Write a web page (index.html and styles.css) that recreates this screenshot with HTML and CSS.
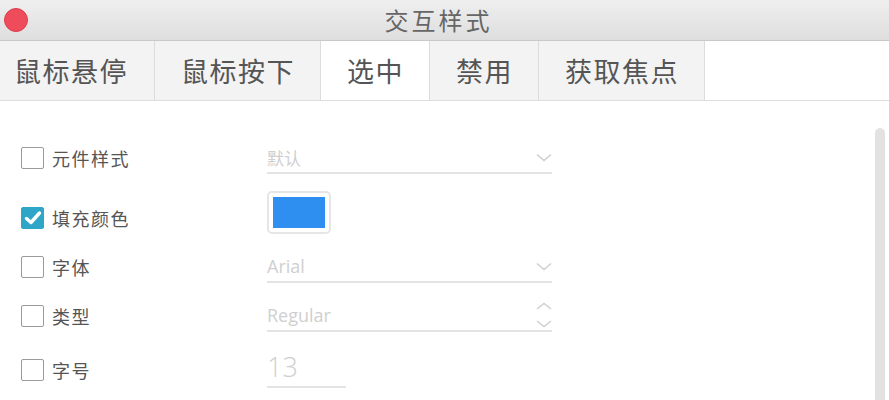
FILE: index.html
```html
<!DOCTYPE html>
<html lang="zh">
<head>
<meta charset="utf-8">
<title>交互样式</title>
<link rel="stylesheet" href="styles.css">
</head>
<body>
<div class="window">
  <header class="titlebar">
    <div class="lights"><span class="close"></span></div>
    <div class="title">交互样式</div>
    <div></div>
  </header>
  <nav class="tabs">
    <div class="tab first">鼠标悬停</div>
    <div class="tab">鼠标按下</div>
    <div class="tab active">选中</div>
    <div class="tab">禁用</div>
    <div class="tab">获取焦点</div>
    <div class="tab-rest"></div>
  </nav>
  <section class="content">
    <div class="form">
      <div class="row">
        <span class="check"></span>
        <span class="label">元件样式</span>
        <div class="field">
          <span class="value">默认</span>
          <svg class="chev" width="16" height="9" viewBox="0 0 16 9"><path d="M1 1.5 L8 7.5 L15 1.5" fill="none" stroke="#cfcfcf" stroke-width="1.5"/></svg>
        </div>
      </div>
      <div class="row swatch-row">
        <span class="check on"><svg width="18" height="16" viewBox="0 0 18 16"><path d="M2.5 8.5 L7 12.5 L15.5 3" fill="none" stroke="#fff" stroke-width="3.4" stroke-linecap="round" stroke-linejoin="round"/></svg></span>
        <span class="label">填充颜色</span>
        <div class="swatch"><span class="fill"></span></div>
      </div>
      <div class="row">
        <span class="check"></span>
        <span class="label">字体</span>
        <div class="field">
          <span class="value latin">Arial</span>
          <svg class="chev" width="16" height="9" viewBox="0 0 16 9"><path d="M1 1.5 L8 7.5 L15 1.5" fill="none" stroke="#cfcfcf" stroke-width="1.5"/></svg>
        </div>
      </div>
      <div class="row">
        <span class="check"></span>
        <span class="label">类型</span>
        <div class="field">
          <span class="value latin">Regular</span>
          <svg class="chev" width="16" height="26" viewBox="0 0 16 26"><path d="M1 7 L8 1.5 L15 7 M1 19 L8 24.5 L15 19" fill="none" stroke="#cfcfcf" stroke-width="1.5"/></svg>
        </div>
      </div>
      <div class="row">
        <span class="check"></span>
        <span class="label">字号</span>
        <div class="field short">
          <span class="value num">13</span>
        </div>
      </div>
    </div>
    <div class="scrollbar"></div>
  </section>
</div>
</body>
</html>
```

FILE: styles.css
```css
* { box-sizing: border-box; }
html, body { margin: 0; padding: 0; background: #fff; }
body {
  font-family: "Noto Sans CJK SC", "Noto Sans", sans-serif;
  color: #555;
  width: 889px;
  height: 400px;
  overflow: hidden;
}
.window { display: flex; flex-direction: column; height: 400px; }

.titlebar {
  height: 41px;
  display: grid;
  grid-template-columns: 1fr auto 1fr;
  align-items: center;
  background: linear-gradient(#efefef, #dedede);
  border-bottom: 1px solid #c9c9c9;
}
.lights { display: flex; align-items: center; padding-left: 4px; }
.close {
  width: 24px; height: 24px; border-radius: 50%;
  background: #ee4c5a;
  border: 1px solid #dc3f4d;
}
.title {
  font-size: 24px;
  letter-spacing: 3px;
  color: #666;
  line-height: 1;
  padding-right: 12px;
}

.tabs {
  display: flex;
  height: 60px;
  border-bottom: 1px solid #dedede;
  background: #fff;
}
.tab {
  display: flex; align-items: center;
  padding: 0 25px 0 26px;
  font-size: 27px;
  letter-spacing: 1.5px;
  color: #555;
  background: #f3f3f3;
  border-right: 1px solid #dcdcdc;
  white-space: nowrap;
}
.tab.first { padding-left: 14px; padding-right: 26px; }
.tab.active { background: #fff; }
.tab-rest { flex: 1; background: #fff; }

.content { flex: 1; display: flex; }
.form {
  flex: 1;
  padding: 41px 0 0 21px;
  display: flex; flex-direction: column; gap: 17px;
}
.row { display: flex; align-items: center; height: 32px; }
.row.swatch-row { height: 43px; }
.row:last-child { height: 36px; margin-top: 3px; }

.check {
  width: 23px; height: 22px;
  border: 1.5px solid #9a9a9a;
  border-radius: 2px;
  background: #fff;
  display: flex; align-items: center; justify-content: center;
  flex: none;
}
.swatch-row .check { margin-top: 10px; }
.check.on { background: #2fa6c8; border-color: #2fa6c8; }
.label {
  width: 223px;
  padding-left: 8px;
  font-size: 18px;
  letter-spacing: 1.5px;
  color: #555;
}
.swatch-row .label { margin-top: 10px; }

.field {
  width: 285px; height: 100%;
  border-bottom: 2px solid #e3e3e3;
  display: flex; align-items: center; justify-content: space-between;
}
.field.short { width: 79px; }
.value {
  font-size: 17px;
  color: #cfcfcf;
}
.value.latin { font-family: "Open Sans", "Noto Sans", sans-serif; font-size: 18px; }
.value.num { font-family: "Open Sans", sans-serif; font-size: 27px; font-weight: 300; color: #cfcfcf; margin-top: -6px; }
.chev { flex: none; }

.swatch {
  width: 64px; height: 43px;
  border: 2px solid #e6e6e6;
  border-radius: 5px;
  padding: 4px;
  display: flex;
}
.fill { flex: 1; background: #2e8ff0; }

.scrollbar {
  width: 10px;
  margin: 27px 4px 0 0;
  background: #e2e2e2;
  border-radius: 5px 5px 0 0;
}
```
